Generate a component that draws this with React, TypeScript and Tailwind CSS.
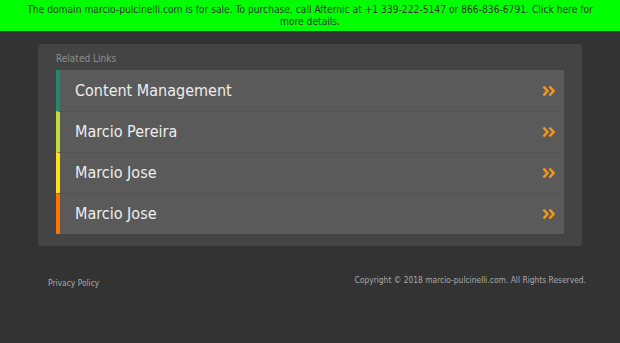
const LINKS = [
  { label: 'Content Management', color: 'border-l-[#1f8a70]' },
  { label: 'Marcio Pereira', color: 'border-l-[#bedb39]' },
  { label: 'Marcio Jose', color: 'border-l-[#ffe11a]' },
  { label: 'Marcio Jose', color: 'border-l-[#fd7400]' },
]

function Chevrons() {
  return (
    <svg width="14" height="12" viewBox="0 0 14 12" fill="none" stroke="#f0961e" strokeWidth="2.6" strokeLinejoin="miter">
      <path d="M1.5 1.5 L5.5 6 L1.5 10.5" />
      <path d="M7.5 1.5 L11.5 6 L7.5 10.5" />
    </svg>
  )
}

export default function App() {
  return (
    <div className="min-h-[343px] bg-[#333333] font-['DejaVu_Sans_Condensed','DejaVu_Sans',sans-serif] font-stretch-condensed">
      <div className="bg-[#00ff00] px-[22px] pt-[4px] pb-[3px] text-center text-[10.2px] leading-[12px] text-[#333]">
        The domain marcio-pulcinelli.com is for sale. To purchase, call Afternic at +1 339-222-5147 or 866-836-6791. Click here for
        more details.
      </div>

      <div className="mx-auto mt-[13px] w-[544px] rounded-[3px] bg-[#444444] px-[18px] pt-[8px] pb-[12px]">
        <div className="mb-[4px] pl-[-1px] text-[10px] leading-[14px] text-[#8f8f8f]">Related Links</div>
        <div className="flex flex-col">
          {LINKS.map((link, i) => (
            <div
              key={i}
              className={`flex h-[41px] items-center justify-between border-l-4 bg-[#5a5a5a] pr-[8px] pl-[15px] ${link.color} ${
                i > 0 ? 'border-t border-t-[#535353]' : ''
              }`}
            >
              <span className="text-[16px] text-[#eeeeee]">{link.label}</span>
              <Chevrons />
            </div>
          ))}
        </div>
      </div>

      <div className="flex items-start justify-between pt-[28px] pr-[34px] pl-[48px] text-[8.4px] text-[#aaaaaa]">
        <span className="mt-[3px]">Privacy Policy</span>
        <span>Copyright © 2018 marcio-pulcinelli.com. All Rights Reserved.</span>
      </div>
    </div>
  )
}
